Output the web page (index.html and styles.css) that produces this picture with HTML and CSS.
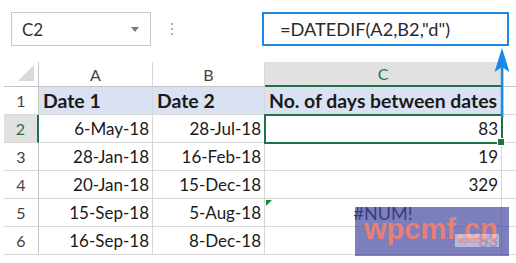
FILE: index.html
```html
<!DOCTYPE html>
<html lang="en">
<head>
    <meta charset="UTF-8">
    <title>DATEDIF days</title>
    <link rel="stylesheet" href="styles.css">
</head>
<body>
<div class="sheet">
    <div class="bar">
        <div class="namebox">
            <span>C2</span>
            <span class="caret"></span>
        </div>
        <svg class="dots" width="4" height="14" viewBox="0 0 4 14">
            <circle cx="2" cy="2" r="1.1"/>
            <circle cx="2" cy="7" r="1.1"/>
            <circle cx="2" cy="12" r="1.1"/>
        </svg>
        <div class="formula">=DATEDIF(A2,B2,"d")</div>
    </div>

    <div class="grid">
        <div class="hd corner"><span class="tri"></span></div>
        <div class="hd col">A</div>
        <div class="hd col">B</div>
        <div class="hd col sel">C</div>
        <div class="hd col last"></div>

        <div class="rh">1</div>
        <div class="cell title">Date 1</div>
        <div class="cell title">Date 2</div>
        <div class="cell title">No. of days between dates</div>
        <div class="cell last"></div>

        <div class="rh sel">2</div>
        <div class="cell">6-May-18</div>
        <div class="cell">28-Jul-18</div>
        <div class="cell active">83</div>
        <div class="cell last"></div>

        <div class="rh">3</div>
        <div class="cell">28-Jan-18</div>
        <div class="cell">16-Feb-18</div>
        <div class="cell">19</div>
        <div class="cell last"></div>

        <div class="rh">4</div>
        <div class="cell">20-Jan-18</div>
        <div class="cell">15-Dec-18</div>
        <div class="cell">329</div>
        <div class="cell last"></div>

        <div class="rh">5</div>
        <div class="cell">15-Sep-18</div>
        <div class="cell">5-Aug-18</div>
        <div class="cell err">#NUM!</div>
        <div class="cell last"></div>

        <div class="rh">6</div>
        <div class="cell">16-Sep-18</div>
        <div class="cell">8-Dec-18</div>
        <div class="cell">83</div>
        <div class="cell last"></div>
    </div>

    <!-- arrow from the cell up to the formula bar -->
    <svg class="arrow" width="16" height="70" viewBox="0 0 16 70">
        <path d="M8 0 L15.5 24 L8 19 L0.5 24 Z" fill="#1e88e5"/>
        <rect x="6.8" y="16" width="2.6" height="54" fill="#1e88e5"/>
    </svg>

    <div class="mark">wpcmf.cn<span class="mark-sm">wpcmf.cn</span></div>
</div>
</body>
</html>
```

FILE: styles.css
```css
* {
    box-sizing: border-box;
}

body {
    margin: 0;
    background: #fff;
    font-family: Lato, "Open Sans", sans-serif;
    color: #1a1a1a;
}

.sheet {
    position: relative;
    width: 516px;
    height: 263px;
    overflow: hidden;
}

/* name box + formula bar */
.bar {
    display: flex;
    align-items: center;
    padding: 12px 0 0 11px;
    height: 46px;
}

.namebox {
    display: flex;
    align-items: center;
    justify-content: space-between;
    width: 140px;
    height: 34px;
    padding: 0 11px 0 10px;
    border: 1px solid #c8c8c8;
    font-size: 17px;
    color: #333;
}

.caret {
    width: 0;
    height: 0;
    border-left: 4px solid transparent;
    border-right: 4px solid transparent;
    border-top: 5px solid #7a7a7a;
}

.dots {
    fill: #9a9a9a;
    margin: 0 88px 0 19px;
}

.formula {
    width: 247px;
    height: 34px;
    line-height: 30px;
    padding-left: 16px;
    border: 2px solid #1e88e5;
    font-size: 18.2px;
    color: #2a2a2a;
}

/* worksheet grid */
.grid {
    display: grid;
    grid-template-columns: 35px 114px 112px 237px 20px;
    grid-template-rows: 25px repeat(6, 28px);
    margin: 16px 0 0 4px;
    font-size: 17px;
}

.grid > div {
    border-right: 1px solid #d8d8d8;
    border-bottom: 1px solid #d8d8d8;
}

.hd {
    display: flex;
    align-items: center;
    justify-content: center;
    color: #444;
    border-bottom-color: #c4c4c4 !important;
}

.hd.col {
    font-size: 16px;
}

.hd.sel {
    background: #e1e1e1;
    color: #217346;
    border-bottom: 2px solid #217346 !important;
}

.corner {
    position: relative;
    border-right-color: #c4c4c4 !important;
}

.tri {
    position: absolute;
    right: 4px;
    bottom: 5px;
    width: 0;
    height: 0;
    border-left: 16px solid transparent;
    border-bottom: 16px solid #dadada;
}

.rh {
    display: flex;
    align-items: center;
    justify-content: center;
    color: #444;
    font-size: 16px;
    border-right-color: #c4c4c4 !important;
}

.rh.sel {
    background: #e1e1e1;
    color: #217346;
    border-right: 2px solid #217346 !important;
}

.cell {
    display: flex;
    align-items: center;
    justify-content: flex-end;
    padding-right: 3px;
}

.cell.title {
    justify-content: flex-start;
    padding-left: 4px;
    background: #d9e1f2;
    font-size: 19.4px;
    font-weight: bold;
    color: #1a1a1a;
}

.cell.last {
    background: #fff;
    border-right: none !important;
}

.cell.active {
    position: relative;
    outline: 2px solid #217346;
    outline-offset: -1px;
}

.cell.active::after {
    content: "";
    position: absolute;
    right: -4px;
    bottom: -4px;
    width: 6px;
    height: 6px;
    background: #217346;
    border: 1px solid #fff;
}

.cell.err {
    position: relative;
    justify-content: center;
    padding-right: 0;
    font-size: 18px;
}

.cell.err::before {
    content: "";
    position: absolute;
    left: 1px;
    top: 1px;
    width: 0;
    height: 0;
    border-top: 6px solid #1a8a2c;
    border-right: 6px solid transparent;
}

/* overlays */
.arrow {
    position: absolute;
    left: 494px;
    top: 48px;
}

.mark {
    position: absolute;
    left: 355px;
    top: 207px;
    width: 154px;
    height: 49px;
    padding: 8px 0 0 9px;
    background: rgba(70, 72, 160, 0.7);
    color: rgba(240, 128, 112, 0.95);
    font-family: "Liberation Sans", Arial, sans-serif;
    font-size: 29px;
    font-weight: bold;
    line-height: 29px;
}

.mark-sm {
    position: absolute;
    left: 100px;
    top: 27px;
    width: 44px;
    height: 13px;
    background: rgba(255, 255, 255, 0.45);
    font-size: 9px;
    line-height: 13px;
    font-weight: normal;
    text-align: center;
}
```
